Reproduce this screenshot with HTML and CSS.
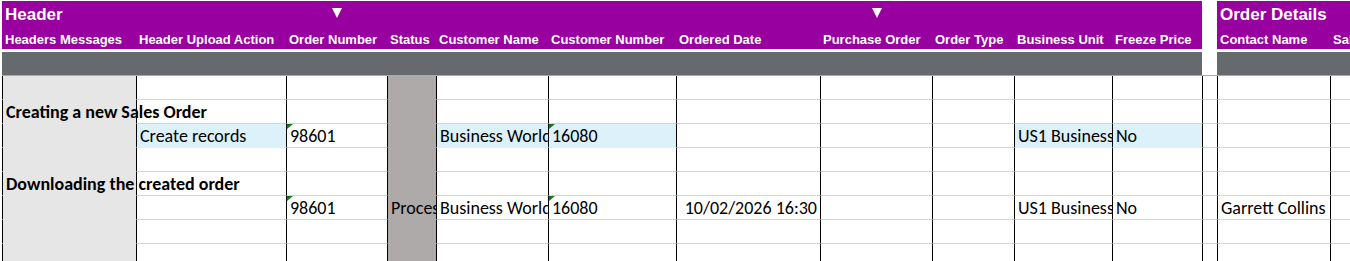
FILE: index.html
```html
<!DOCTYPE html>
<html lang="en">
<head>
    <meta charset="UTF-8">
    <title>Sales Order Upload</title>
    <link rel="stylesheet" href="styles.css">
</head>
<body>
    <div class="sheet">
        <!-- group titles -->
        <div class="row band-top">
            <div class="hcell group">Header</div>
            <div class="hcell"></div>
            <div class="hcell arrow"><span class="drop"></span></div>
            <div class="hcell"></div>
            <div class="hcell"></div>
            <div class="hcell"></div>
            <div class="hcell"></div>
            <div class="hcell arrow"><span class="drop"></span></div>
            <div class="hcell"></div>
            <div class="hcell"></div>
            <div class="hcell"></div>
            <div class="hcell gap"></div>
            <div class="hcell group">Order Details</div>
            <div class="hcell"></div>
        </div>

        <!-- column names -->
        <div class="row band-names">
            <div class="hcell">Headers Messages</div>
            <div class="hcell">Header Upload Action</div>
            <div class="hcell">Order Number</div>
            <div class="hcell">Status</div>
            <div class="hcell">Customer Name</div>
            <div class="hcell">Customer Number</div>
            <div class="hcell">Ordered Date</div>
            <div class="hcell">Purchase Order</div>
            <div class="hcell">Order Type</div>
            <div class="hcell">Business Unit</div>
            <div class="hcell">Freeze Price</div>
            <div class="hcell gap"></div>
            <div class="hcell">Contact Name</div>
            <div class="hcell">Sales Person</div>
        </div>

        <!-- grey bar -->
        <div class="row bar">
            <div></div><div></div><div></div><div></div><div></div><div></div><div></div>
            <div></div><div></div><div></div><div></div><div class="gap"></div><div></div><div></div>
        </div>

        <div class="row">
            <div class="cell side"></div><div class="cell"></div><div class="cell"></div><div class="cell status"></div>
            <div class="cell"></div><div class="cell"></div><div class="cell"></div><div class="cell"></div>
            <div class="cell"></div><div class="cell"></div><div class="cell"></div><div class="cell"></div>
            <div class="cell"></div><div class="cell"></div>
        </div>

        <div class="row">
            <div class="cell side title">Creating a new Sales Order</div><div class="cell"></div><div class="cell"></div><div class="cell status"></div>
            <div class="cell"></div><div class="cell"></div><div class="cell"></div><div class="cell"></div>
            <div class="cell"></div><div class="cell"></div><div class="cell"></div><div class="cell"></div>
            <div class="cell"></div><div class="cell"></div>
        </div>

        <div class="row">
            <div class="cell side"></div>
            <div class="cell input">Create records</div>
            <div class="cell flag">98601</div>
            <div class="cell status"></div>
            <div class="cell input">Business World</div>
            <div class="cell input flag">16080</div>
            <div class="cell"></div>
            <div class="cell"></div>
            <div class="cell"></div>
            <div class="cell input">US1 Business</div>
            <div class="cell input">No</div>
            <div class="cell"></div>
            <div class="cell"></div>
            <div class="cell"></div>
        </div>

        <div class="row">
            <div class="cell side"></div><div class="cell"></div><div class="cell"></div><div class="cell status"></div>
            <div class="cell"></div><div class="cell"></div><div class="cell"></div><div class="cell"></div>
            <div class="cell"></div><div class="cell"></div><div class="cell"></div><div class="cell"></div>
            <div class="cell"></div><div class="cell"></div>
        </div>

        <div class="row">
            <div class="cell side title">Downloading the created order</div><div class="cell"></div><div class="cell"></div><div class="cell status"></div>
            <div class="cell"></div><div class="cell"></div><div class="cell"></div><div class="cell"></div>
            <div class="cell"></div><div class="cell"></div><div class="cell"></div><div class="cell"></div>
            <div class="cell"></div><div class="cell"></div>
        </div>

        <div class="row">
            <div class="cell side"></div>
            <div class="cell"></div>
            <div class="cell flag">98601</div>
            <div class="cell status">Processed</div>
            <div class="cell">Business World</div>
            <div class="cell flag">16080</div>
            <div class="cell num">10/02/2026 16:30</div>
            <div class="cell"></div>
            <div class="cell"></div>
            <div class="cell">US1 Business</div>
            <div class="cell">No</div>
            <div class="cell"></div>
            <div class="cell">Garrett Collins</div>
            <div class="cell"></div>
        </div>

        <div class="row">
            <div class="cell side"></div><div class="cell"></div><div class="cell"></div><div class="cell status"></div>
            <div class="cell"></div><div class="cell"></div><div class="cell"></div><div class="cell"></div>
            <div class="cell"></div><div class="cell"></div><div class="cell"></div><div class="cell"></div>
            <div class="cell"></div><div class="cell"></div>
        </div>

        <div class="row">
            <div class="cell side"></div><div class="cell"></div><div class="cell"></div><div class="cell status"></div>
            <div class="cell"></div><div class="cell"></div><div class="cell"></div><div class="cell"></div>
            <div class="cell"></div><div class="cell"></div><div class="cell"></div><div class="cell"></div>
            <div class="cell"></div><div class="cell"></div>
        </div>
    </div>
</body>
</html>
```

FILE: styles.css
```css
* {
    box-sizing: border-box;
}

body {
    margin: 0;
    background: #fff;
    overflow: hidden;
    font-family: "Liberation Sans", Arial, sans-serif;
}

.sheet {
    margin: 1px 0 0 2px;
    width: 1420px;
}

.row {
    display: grid;
    grid-template-columns: 134px 150px 101px 49px 112px 128px 144px 112px 82px 98px 90px 15px 113px 120px;
}

/* purple header bands */
.band-top,
.band-names {
    background: #9900a0;
    color: #fff;
    font-weight: bold;
}

.band-top {
    height: 26px;
}

.band-names {
    height: 22px;
    font-size: 13px;
    line-height: 15px;
}

.hcell {
    display: flex;
    align-items: flex-end;
    padding: 0 0 2px 3px;
    white-space: nowrap;
}

.hcell.group {
    align-items: center;
    padding-bottom: 0;
    font-size: 17px;
    line-height: 19px;
}

.hcell.arrow {
    justify-content: center;
    align-items: flex-start;
    padding: 7px 0 0 1px;
}

.drop {
    width: 0;
    height: 0;
    border-left: 5.5px solid transparent;
    border-right: 5.5px solid transparent;
    border-top: 10px solid #fff;
}

.gap {
    background: #fff;
}

.bar {
    height: 24px;
    margin-top: 3px;
    background: #66696d;
    border-bottom: 1px solid #a9a9a9;
}

/* data grid */
.cell {
    position: relative;
    height: 24px;
    display: flex;
    align-items: flex-end;
    padding: 0 3px 0 3px;
    border-left: 1px solid #000;
    border-bottom: 1px solid #d4d4d4;
    white-space: nowrap;
    overflow: hidden;
    font-family: Carlito, Lato, sans-serif;
    font-size: 18px;
    line-height: 22px;
    color: #000;
}

.cell.side {
    background: #e7e6e6;
    border-bottom-color: transparent;
}

.cell.status {
    background: #aeaaaa;
    border-bottom-color: transparent;
}

.cell.title {
    overflow: visible;
    font-weight: bold;
}

.cell.input {
    background: #ddf1fb;
    border-bottom-color: transparent;
}

.cell.num {
    justify-content: flex-end;
}

/* number stored as text marker */
.flag::before {
    content: "";
    position: absolute;
    top: 0;
    left: 0;
    border-top: 5px solid #17751a;
    border-right: 6px solid transparent;
}
```
